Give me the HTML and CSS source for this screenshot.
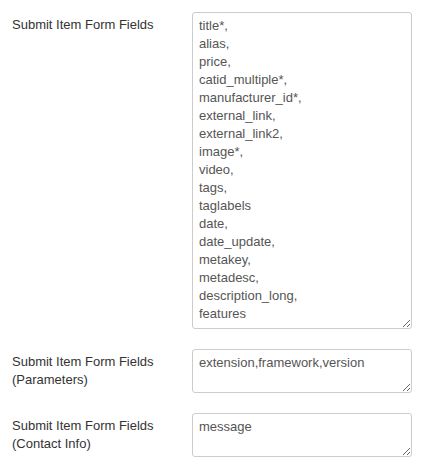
FILE: index.html
```html
<!DOCTYPE html>
<html>
<head>
<meta charset="utf-8">
<link rel="stylesheet" href="styles.css">
</head>
<body>
<form class="form">
  <div class="group">
    <label class="label" for="f1">Submit Item Form Fields</label>
    <div class="controls">
      <textarea id="f1" class="field field-tall">title*,
alias,
price,
catid_multiple*,
manufacturer_id*,
external_link,
external_link2,
image*,
video,
tags,
taglabels
date,
date_update,
metakey,
metadesc,
description_long,
features</textarea>
    </div>
  </div>
  <div class="group">
    <label class="label" for="f2">Submit Item Form Fields (Parameters)</label>
    <div class="controls">
      <textarea id="f2" class="field field-short">extension,framework,version</textarea>
    </div>
  </div>
  <div class="group">
    <label class="label" for="f3">Submit Item Form Fields (Contact Info)</label>
    <div class="controls">
      <textarea id="f3" class="field field-short">message</textarea>
    </div>
  </div>
</form>
</body>
</html>
```
FILE: styles.css
```css
html, body {
  margin: 0;
  padding: 0;
  background: #fff;
}
body {
  font-family: "Liberation Sans", Arial, sans-serif;
  font-size: 13px;
  line-height: 18px;
  color: #333;
}
.form {
  display: flex;
  flex-direction: column;
  gap: 20px;
  padding: 12px 0 0 12px;
}
.group {
  display: flex;
  align-items: flex-start;
}
.label {
  width: 180px;
  flex: none;
  padding-top: 4px;
  color: #333;
}
.controls {
  flex: none;
}
.field {
  display: block;
  box-sizing: border-box;
  width: 220px;
  margin: 0;
  padding: 4px 6px;
  border: 1px solid #ccc;
  border-radius: 3px;
  font-family: "Liberation Sans", Arial, sans-serif;
  font-size: 13px;
  line-height: 18px;
  color: #555;
  background: #fff;
  resize: both;
  overflow: hidden;
}
.field-tall {
  height: 317px;
}
.field-short {
  height: 44px;
}
```
